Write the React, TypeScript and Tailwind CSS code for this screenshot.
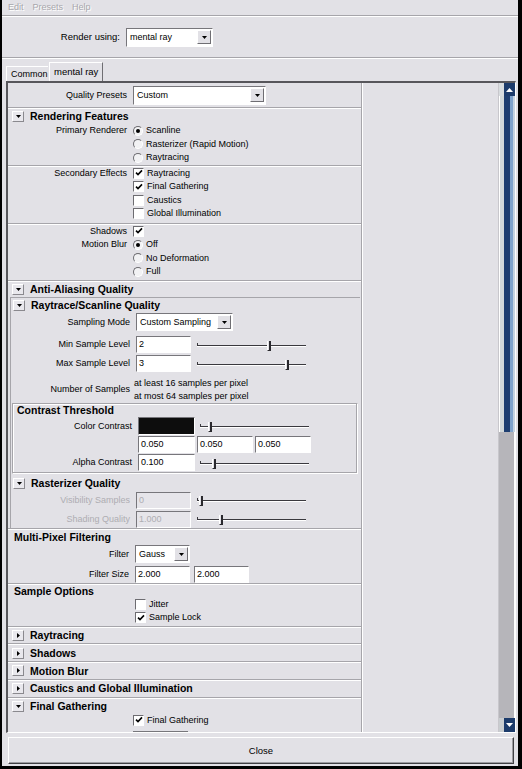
import React from "react";

const FONT = "font-['Liberation_Sans',Arial,sans-serif]";

function Etch() {
  return <div className="h-[2px] shrink-0 border-t border-b border-t-[#a6a5aa] border-b-white" />;
}

function Tri({ dir = "down", color = "#000" }: { dir?: "down" | "right" | "up"; color?: string }) {
  if (dir === "right")
    return (
      <svg width="3" height="5" viewBox="0 0 3 5">
        <path d="M0 0v5l3-2.5z" fill={color} />
      </svg>
    );
  if (dir === "up")
    return (
      <svg width="7" height="4" viewBox="0 0 7 4">
        <path d="M0 4h7L3.5 0z" fill={color} />
      </svg>
    );
  return (
    <svg width="5" height="3" viewBox="0 0 5 3">
      <path d="M0 0h5L2.5 3z" fill={color} />
    </svg>
  );
}

function Arrow({ open }: { open: boolean }) {
  return (
    <span className="flex h-[11px] w-[12px] shrink-0 items-center justify-center border border-t-white border-l-white border-r-[#8a898e] border-b-[#8a898e] bg-[#e9e8ed]">
      <Tri dir={open ? "down" : "right"} />
    </span>
  );
}

function FrameHead({ title, open, h, pl = "pl-[4px]" }: { title: string; open: boolean; h: string; pl?: string }) {
  return (
    <div className={`flex shrink-0 items-center ${h} ${pl}`}>
      <Arrow open={open} />
      <span className="ml-[6px] text-[10.5px] font-bold">{title}</span>
    </div>
  );
}

function Radio({ on }: { on?: boolean }) {
  return (
    <span className="flex h-[10px] w-[10px] shrink-0 items-center justify-center rounded-full border border-t-[#6d6c71] border-l-[#6d6c71] border-r-white border-b-white bg-[#f2f2f4]">
      {on && <span className="h-[4px] w-[4px] rounded-full bg-black" />}
    </span>
  );
}

function Check({ on }: { on?: boolean }) {
  return (
    <span className="flex h-[11px] w-[11px] shrink-0 items-center justify-center border border-t-[#6d6c71] border-l-[#6d6c71] border-r-white border-b-white bg-white">
      {on && (
        <svg width="8" height="8" viewBox="0 0 8 8">
          <path d="M1 3.6 3 5.6 7 1.4" fill="none" stroke="#000" strokeWidth="1.6" />
        </svg>
      )}
    </span>
  );
}

function Field({ w, value, h = "h-[17px]", disabled }: { w: string; value: string; h?: string; disabled?: boolean }) {
  return (
    <span
      className={`flex shrink-0 items-center border border-t-[#77767b] border-l-[#77767b] border-r-white border-b-white pl-[2px] ${w} ${h} ${
        disabled ? "bg-[#e6e5ea] text-[#aeadb2]" : "bg-white"
      }`}
    >
      {value}
    </span>
  );
}

function Select({ w, value, h = "h-[18px]" }: { w: string; value: string; h?: string }) {
  return (
    <span
      className={`flex shrink-0 items-center justify-between border border-t-[#77767b] border-l-[#77767b] border-r-white border-b-white bg-white pl-[3px] pr-[1px] ${w} ${h}`}
    >
      <span>{value}</span>
      <span className="flex h-[14px] w-[14px] items-center justify-center border border-t-white border-l-white border-r-[#6f6e73] border-b-[#6f6e73] bg-[#e2e1e6]">
        <Tri />
      </span>
    </span>
  );
}

function Slider({ pos }: { pos: number }) {
  return (
    <span className="relative block h-[12px] w-[109px] shrink-0">
      <span className="absolute left-0 right-0 top-[6px] h-[2px] border-t border-b border-t-[#3a393e] border-b-white" />
      <span className="absolute left-0 top-[4px] h-[3px] w-[1px] bg-[#3a393e]" />
      <span
        className="absolute top-[2px] h-[10px] w-[4px] border-r-2 border-b border-l border-r-[#2a292e] border-b-[#2a292e] border-l-white bg-[#e2e1e6]"
        style={{ left: pos }}
      />
    </span>
  );
}

function Row({ label, h, children, dim }: { label?: string; h: string; children?: React.ReactNode; dim?: boolean }) {
  return (
    <div className={`flex shrink-0 items-center ${h}`}>
      <span className={`w-[119px] shrink-0 text-right ${dim ? "text-[#aeadb2]" : ""}`}>{label}</span>
      <div className="ml-[6px] flex items-center">{children}</div>
    </div>
  );
}

function Opt({ label, h, text, kind, on }: { label?: string; h: string; text: string; kind: "radio" | "check"; on?: boolean }) {
  return (
    <Row label={label} h={h}>
      {kind === "radio" ? <Radio on={on} /> : <Check on={on} />}
      <span className="ml-[3px]">{text}</span>
    </Row>
  );
}

function Scrollbar() {
  return (
    <div className="flex w-[17px] shrink-0 flex-col border-l border-l-[#c8c7cc] bg-[#b6b5ba]">
      <div className="flex h-[13px] shrink-0">
        <div className="w-[5px] bg-[#d8dcdf]" />
        <div className="flex flex-1 items-center justify-center bg-[#1c3b6b]">
          <Tri dir="up" color="#fff" />
        </div>
      </div>
      <div className="flex h-[336px] shrink-0">
        <div className="w-[5px] border-l border-l-white bg-[#d3d9da]" />
        <div className="w-[6px] bg-[#1e3e70]" />
        <div className="w-[3px] bg-[#7fa3cc]" />
        <div className="flex-1 bg-[#c5d3e1]" />
      </div>
      <div className="flex-1 border-r border-r-white" />
      <div className="flex h-[14px] shrink-0">
        <div className="w-[5px] bg-[#c9cdd0]" />
        <div className="flex flex-1 items-center justify-center bg-[#1c3b6b]">
          <span className="rotate-180">
            <Tri dir="up" color="#fff" />
          </span>
        </div>
      </div>
    </div>
  );
}

export default function App() {
  return (
    <div className={`h-[769px] w-[522px] bg-black pl-[2px] pr-[4px] pb-[3px] text-[9px] leading-none text-black ${FONT}`}>
      <div className="flex h-full flex-col bg-[#e2e1e6]">
        {/* menu bar */}
        <div className="flex h-[15px] shrink-0 items-center gap-[9px] pl-[6px] text-[#a8a7ac] [text-shadow:1px_1px_0_#fff]">
          <span>Edit</span>
          <span>Presets</span>
          <span>Help</span>
        </div>
        <Etch />
        <div className="flex h-[40px] shrink-0 items-center">
          <span className="w-[118px] text-right text-[9.5px]">Render using:</span>
          <span className="ml-[6px]">
            <Select w="w-[87px]" h="h-[19px]" value="mental ray" />
          </span>
        </div>
        <Etch />

        {/* tabs */}
        <div className="flex h-[22px] shrink-0 items-end pl-[4px]">
          <span className="flex h-[15px] w-[42px] items-center border-t border-l border-t-white border-l-white pl-[4px]">Common</span>
          <span className="ml-[1px] flex h-[19px] w-[54px] items-center border-t border-l border-r border-t-white border-l-white border-r-[#6f6e73] pl-[4px] text-[9.5px]">
            mental ray
          </span>
        </div>

        {/* scroll panel */}
        <div className="ml-[4px] flex h-[652px] w-[510px] shrink-0 border-t-2 border-l-2 border-r border-b border-t-[#57565b] border-l-[#57565b] border-r-white border-b-white">
          <div className="flex w-[354px] shrink-0 flex-col overflow-hidden border-r border-r-[#a6a5aa] shadow-[1px_0_0_#fff]">
            <Row label="Quality Presets" h="h-[24px]">
              <Select w="w-[133px]" h="h-[19px]" value="Custom" />
            </Row>
            <Etch />

            <FrameHead title="Rendering Features" open h="h-[15px]" />
            <Opt label="Primary Renderer" h="h-[13.5px]" kind="radio" on text="Scanline" />
            <Opt h="h-[13.5px]" kind="radio" text="Rasterizer (Rapid Motion)" />
            <Opt h="h-[13.5px]" kind="radio" text="Raytracing" />
            <Etch />
            <Opt label="Secondary Effects" h="h-[13.5px]" kind="check" on text="Raytracing" />
            <Opt h="h-[13.5px]" kind="check" on text="Final Gathering" />
            <Opt h="h-[13.5px]" kind="check" text="Caustics" />
            <Opt h="h-[13.5px]" kind="check" text="Global Illumination" />
            <div className="h-[2px] shrink-0" />
            <Etch />
            <Row label="Shadows" h="h-[13.5px]">
              <Check on />
            </Row>
            <Opt label="Motion Blur" h="h-[13.5px]" kind="radio" on text="Off" />
            <Opt h="h-[13.5px]" kind="radio" text="No Deformation" />
            <Opt h="h-[13.5px]" kind="radio" text="Full" />
            <div className="h-[1px] shrink-0" />
            <Etch />

            <FrameHead title="Anti-Aliasing Quality" open h="h-[15px]" />
            <div className="ml-[2px] mr-[1px] flex flex-col border-t border-l border-t-[#a6a5aa] border-l-[#a6a5aa]">
              <FrameHead title="Raytrace/Scanline Quality" open h="h-[15px]" pl="pl-[2px]" />
              <Row label="Sampling Mode" h="h-[19px]">
                <Select w="w-[97px]" value="Custom Sampling" />
              </Row>
              <div className="h-[4px] shrink-0" />
              <Row label="Min Sample Level" h="h-[18px]">
                <Field w="w-[55px]" value="2" />
                <span className="ml-[6px]">
                  <Slider pos={70} />
                </span>
              </Row>
              <div className="h-[1px] shrink-0" />
              <Row label="Max Sample Level" h="h-[18px]">
                <Field w="w-[55px]" value="3" />
                <span className="ml-[6px]">
                  <Slider pos={88} />
                </span>
              </Row>
              <div className="flex shrink-0 items-center pt-[4px]">
                <span className="w-[119px] shrink-0 text-right">Number of Samples</span>
                <div className="ml-[4px] flex flex-col">
                  <span className="flex h-[13px] items-center">at least 16 samples per pixel</span>
                  <span className="flex h-[13px] items-center">at most 64 samples per pixel</span>
                </div>
              </div>

              <div className="ml-[1px] mr-[2px] flex flex-col border border-t-[#a6a5aa] border-l-[#a6a5aa] border-r-white border-b-white pb-[1px] shadow-[inset_-1px_-1px_0_#a6a5aa,inset_1px_1px_0_#fff]">
                <div className="flex h-[13px] shrink-0 items-center pl-[4px] text-[10.5px] font-bold">Contrast Threshold</div>
                <Row label="Color Contrast" h="h-[19px]">
                  <span className="h-[18px] w-[57px] border border-t-[#77767b] border-l-[#77767b] border-r-white border-b-white bg-[#0d0d0d]" />
                  <span className="ml-[5px]">
                    <Slider pos={8} />
                  </span>
                </Row>
                <Row h="h-[18px]">
                  <Field w="w-[57px]" value="0.050" />
                  <span className="ml-[2px]">
                    <Field w="w-[56px]" value="0.050" />
                  </span>
                  <span className="ml-[2px]">
                    <Field w="w-[56px]" value="0.050" />
                  </span>
                </Row>
                <Row label="Alpha Contrast" h="h-[18px]">
                  <Field w="w-[57px]" value="0.100" />
                  <span className="ml-[5px]">
                    <Slider pos={12} />
                  </span>
                </Row>
              </div>
            </div>

            <div className="ml-[2px] mr-[1px] flex flex-col border-l border-l-[#a6a5aa] pt-[1px]">
              <FrameHead title="Rasterizer Quality" open h="h-[17px]" pl="pl-[2px]" />
              <Row label="Visibility Samples" h="h-[17px]" dim>
                <Field w="w-[55px]" value="0" disabled />
                <span className="ml-[6px]">
                  <Slider pos={2} />
                </span>
              </Row>
              <div className="h-[2px] shrink-0" />
              <Row label="Shading Quality" h="h-[17px]" dim>
                <Field w="w-[55px]" value="1.000" disabled />
                <span className="ml-[6px]">
                  <Slider pos={22} />
                </span>
              </Row>
            </div>
            <Etch />

            <div className="ml-[2px] mr-[1px] flex flex-col pt-[1px]">
              <div className="flex h-[14px] shrink-0 items-center pl-[4px] text-[10.5px] font-bold">Multi-Pixel Filtering</div>
              <Row label="Filter" h="h-[19px]">
                <Select w="w-[55px]" value="Gauss" />
              </Row>
              <div className="h-[2px] shrink-0" />
              <Row label="Filter Size" h="h-[17px]">
                <Field w="w-[55px]" value="2.000" />
                <span className="ml-[4px]">
                  <Field w="w-[55px]" value="2.000" />
                </span>
              </Row>
            </div>
            <Etch />

            <div className="ml-[2px] mr-[1px] flex flex-col pt-[1px] pb-[1px]">
              <div className="flex h-[12px] shrink-0 items-center pl-[4px] text-[10.5px] font-bold">Sample Options</div>
              <Opt h="h-[13.5px]" kind="check" text="Jitter" />
              <Opt h="h-[13.5px]" kind="check" on text="Sample Lock" />
            </div>

            {["Raytracing", "Shadows", "Motion Blur", "Caustics and Global Illumination"].map((t) => (
              <div key={t} className="flex h-[17.75px] shrink-0 flex-col">
                <Etch />
                <FrameHead title={t} open={false} h="h-[15.75px]" />
              </div>
            ))}
            <Etch />
            <FrameHead title="Final Gathering" open h="h-[15.75px]" />
            <Opt h="h-[12px]" kind="check" on text="Final Gathering" />
            <Row h="h-[14px]">
              <span className="mt-[6px] h-[10px] w-[55px] border-t border-l border-t-[#77767b] border-l-[#77767b] bg-white" />
            </Row>
          </div>
          <div className="flex-1" />
          <Scrollbar />
        </div>

        {/* close */}
        <div className="ml-[6px] mt-[4px] flex h-[27px] w-[506px] shrink-0 items-center justify-center border border-t-white border-l-white border-r-[#404044] border-b-[#404044] shadow-[inset_-1px_-1px_0_#9c9ba0] text-[9.5px]">
          Close
        </div>
      </div>
    </div>
  );
}
